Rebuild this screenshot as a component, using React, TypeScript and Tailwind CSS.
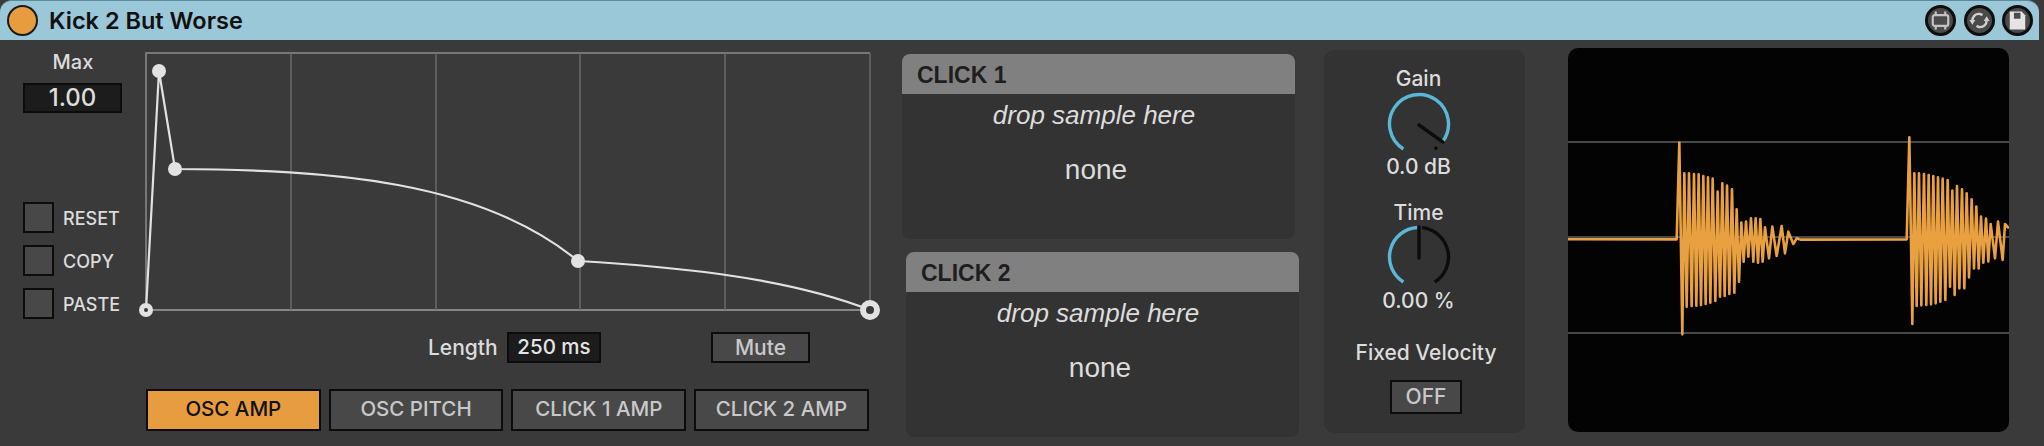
const ui = "font-['Inter',sans-serif]";

// peaks of the two kick bursts, read off the scope as [x, y] offsets at 3x
const burst1: [number, number][] = [
  [110, 358], [118, 68], [127, 643],
  [133, 160], [140, 560], [147, 160], [155, 558], [162, 162], [169, 557], [176, 163], [183, 555],
  [190, 168], [197, 552], [204, 172], [211, 548], [218, 176], [226, 543], [233, 215], [240, 530],
  [247, 190], [254, 528], [261, 197], [268, 522], [276, 208], [283, 518], [290, 268], [297, 485],
  [304, 308], [311, 425], [318, 305], [325, 410], [333, 295], [340, 425], [347, 295], [354, 428],
  [361, 297], [368, 425], [375, 322], [387, 415], [397, 320], [410, 408], [425, 318], [435, 400],
  [445, 335], [460, 372], [470, 355], [482, 359],
];
const burst2: [number, number][] = [
  [80, 358], [88, 52], [97, 612],
  [103, 160], [110, 558], [117, 160], [124, 556], [132, 162], [139, 555], [146, 165], [153, 553],
  [160, 168], [167, 550], [174, 172], [181, 545], [188, 176], [196, 540], [203, 180], [210, 500],
  [217, 212], [224, 525], [231, 198], [238, 505], [246, 208], [253, 505], [260, 220], [267, 472],
  [275, 238], [282, 445], [289, 260], [296, 445], [303, 290], [310, 428], [318, 296], [325, 424],
  [332, 312], [345, 415], [354, 305], [368, 420], [375, 312], [387, 325],
];

function toPage(pts: [number, number][], originX: number) {
  return pts.map(([x, y]) => `${originX + x / 3},${120 + y / 3}`);
}

function Waveform() {
  const points = ["1568,239.3", ...toPage(burst1, 1640), ...toPage(burst2, 1880)].join(" ");
  return (
    <svg className="block" width="441" height="384" viewBox="1568 48 441 384">
      <line x1="1568" x2="2009" y1="142" y2="142" stroke="#484848" strokeWidth="2" />
      <line x1="1568" x2="2009" y1="237" y2="237" stroke="#484848" strokeWidth="2" />
      <line x1="1568" x2="2009" y1="333" y2="333" stroke="#484848" strokeWidth="2" />
      <polyline points={points} fill="none" stroke="#e8a040" strokeWidth="2.6" strokeLinejoin="round" />
    </svg>
  );
}

function Envelope() {
  const grid = [291, 436, 580, 725, 870];
  return (
    <svg className="block shrink-0" width="746" height="285" viewBox="136 40 746 285">
      <path d="M146 310V53H870" fill="none" stroke="#8c8c8c" strokeWidth="1.5" />
      <line x1="146" x2="870" y1="310" y2="310" stroke="#a0a0a0" strokeWidth="1.5" />
      {grid.map((x) => (
        <line key={x} x1={x} x2={x} y1="53" y2="310" stroke="#6a6a6a" strokeWidth="1.5" />
      ))}
      <path
        d="M146 310L159 71L175 169C330 170 480 180 578 261C660 266 780 275 870 310"
        fill="none"
        stroke="#e2e2e2"
        strokeWidth="2.2"
      />
      <circle cx="146" cy="310" r="7" fill="#e2e2e2" />
      <circle cx="146" cy="310" r="2" fill="#3a3a3a" />
      <circle cx="159" cy="71" r="7" fill="#e2e2e2" />
      <circle cx="175" cy="169" r="7" fill="#e2e2e2" />
      <circle cx="578" cy="261" r="7" fill="#e2e2e2" />
      <circle cx="870" cy="310" r="7" fill="#3a3a3a" stroke="#e2e2e2" strokeWidth="6" />
    </svg>
  );
}

function polar(cx: number, cy: number, r: number, deg: number) {
  const a = (deg * Math.PI) / 180;
  return [cx + r * Math.sin(a), cy - r * Math.cos(a)];
}

function arc(r: number, from: number, to: number) {
  const [x1, y1] = polar(32, 32, r, from);
  const [x2, y2] = polar(32, 32, r, to);
  const large = Math.abs(to - from) > 180 ? 1 : 0;
  return `M${x1} ${y1}A${r} ${r} 0 ${large} 1 ${x2} ${y2}`;
}

function Knob({ angle, blueEnd, blackStart }: { angle: number; blueEnd: number; blackStart: number }) {
  const [px, py] = polar(32, 32, 30, angle);
  return (
    <svg className="block" width="64" height="64" viewBox="0 0 64 64">
      <path d={arc(29.5, -148, blueEnd)} fill="none" stroke="#5bb7d8" strokeWidth="3.4" />
      <path d={arc(29.5, blackStart, 148)} fill="none" stroke="#0c0c0c" strokeWidth="3.4" />
      <line x1="32" y1="33" x2={px} y2={py} stroke="#0c0c0c" strokeWidth="3.4" strokeLinecap="round" />
    </svg>
  );
}

function ClickPanel({ title, className }: { title: string; className?: string }) {
  return (
    <div className={`h-[185px] w-[393px] overflow-hidden rounded-[8px] bg-[#333333] font-['Liberation_Sans',Arial,sans-serif] ${className ?? ""}`}>
      <div className="flex h-10 items-center bg-[#808080] pl-[15px] pt-[2px] text-[23px] font-bold leading-none text-[#1e1e1e]">
        {title}
      </div>
      <p className="mt-[6px] pr-[9px] text-center text-[26px] italic leading-[30px] text-[#dcdcdc]">drop sample here</p>
      <p className="mt-[24px] pr-[5px] text-center text-[28px] leading-[32px] text-[#dcdcdc]">none</p>
    </div>
  );
}

function HeaderButton({ children }: { children: React.ReactNode }) {
  return (
    <div className="flex h-[31px] w-[31px] items-center justify-center rounded-full border-[3px] border-[#0e0e0e] bg-[#4a4a4a]">
      <svg width="25" height="25" viewBox="0 0 21 21">{children}</svg>
    </div>
  );
}

function SmallCheck({ label }: { label: string }) {
  return (
    <div className="flex h-[31px] items-center gap-[9px]">
      <div className="h-[31px] w-[31px] border-[2px] border-[#0c0c0c] bg-[#484848]" />
      <span className="pt-[2px] text-[18px] font-medium text-[#dcdcdc]">{label}</span>
    </div>
  );
}

function Tab({ label, active }: { label: string; active?: boolean }) {
  return (
    <div
      className={`flex h-[42px] w-[174.7px] items-center justify-center border-[2px] border-[#0c0c0c] text-[20.5px] font-medium ${
        active ? "bg-[#e89c40] text-[#111111]" : "bg-[#484848] text-[#c8c8c8]"
      }`}
    >
      {label}
    </div>
  );
}

export default function App() {
  return (
    <div className={`h-[446px] w-[2044px] overflow-hidden bg-[#3a3a3a] ${ui}`}>
      {/* Title bar */}
      <div className="flex h-10 w-[2039px] items-center rounded-t-[12px] border-t border-[#5f8a9b] bg-[#9ac8d8] pl-[7px] pr-[6px]">
        <div className="h-[31px] w-[31px] rounded-full border-[2px] border-[#1a1a1a] bg-[#e89c40]" />
        <span className="ml-[11px] text-[23.5px] font-semibold leading-none text-[#111111]">Kick 2 But Worse</span>
        <div className="ml-auto flex gap-[7.5px]">
          <HeaderButton>
            <path d="M6.5 3V6M14.5 3V6M6.5 15V18M14.5 15V18" stroke="#c4c4c4" strokeWidth="1.8" />
            <rect x="4" y="6" width="13" height="9" rx="1.5" fill="none" stroke="#c4c4c4" strokeWidth="1.8" />
          </HeaderButton>
          <HeaderButton>
            <path d="M4.5 11C4.5 7 7 4.5 11 5L13 6" fill="none" stroke="#d0d0d0" strokeWidth="2" />
            <path d="M16.5 10C16.5 14 14 16.5 10 16L8 15" fill="none" stroke="#d0d0d0" strokeWidth="2" />
            <path d="M2 10H7L4.5 14ZM14 11H19L16.5 7Z" fill="#d0d0d0" />
          </HeaderButton>
          <HeaderButton>
            <path d="M4 3H14L17 6V18H4Z" fill="#e4e4e4" />
            <rect x="7.5" y="4" width="5.5" height="5" fill="#4a4a4a" />
          </HeaderButton>
        </div>
      </div>

      <div className="flex">
        {/* Envelope section */}
        <div className="w-[902px] shrink-0">
          <div className="flex">
            <div className="w-[136px] shrink-0 pl-[23px]">
              <div className="mt-[10px] w-[100px] text-center text-[20px] font-medium leading-6 text-[#dcdcdc]">Max</div>
              <div className="mt-[9px] flex h-[30px] w-[99px] items-center justify-center border-[2px] border-[#0c0c0c] bg-[#1c1c1c] text-[24px] font-medium text-[#dcdcdc]">
                1.00
              </div>
              <div className="mt-[89px] flex flex-col gap-[12px]">
                <SmallCheck label="RESET" />
                <SmallCheck label="COPY" />
                <SmallCheck label="PASTE" />
              </div>
            </div>
            <Envelope />
          </div>
          <div className="mt-[7px] flex items-center pl-[428px]">
            <span className="w-[79px] text-[21px] font-medium text-[#dcdcdc]">Length</span>
            <div className="flex h-[31px] w-[94px] items-center justify-center border-[2px] border-[#0c0c0c] bg-[#1c1c1c] text-[20.5px] font-medium text-[#e4e4e4]">
              250 ms
            </div>
            <div className="ml-[110px] flex h-[31px] w-[99px] items-center justify-center border-[2px] border-[#0c0c0c] bg-[#484848] text-[21px] font-medium text-[#c8c8c8]">
              Mute
            </div>
          </div>
          <div className="mt-[25px] flex gap-2 pl-[146px]">
            <Tab label="OSC AMP" active />
            <Tab label="OSC PITCH" />
            <Tab label="CLICK 1 AMP" />
            <Tab label="CLICK 2 AMP" />
          </div>
        </div>

        {/* Sample slots */}
        <div className="w-[397px] shrink-0 pt-[14px]">
          <ClickPanel title="CLICK 1" />
          <ClickPanel title="CLICK 2" className="ml-1 mt-[13px]" />
        </div>

        {/* Gain / time */}
        <div className="ml-[25px] mt-[10px] h-[383px] w-[201px] shrink-0 rounded-[10px] bg-[#333333] text-[#dcdcdc]">
          <div className="flex w-[189px] flex-col items-center pt-[17px] text-[21px] font-medium leading-6">
            <span>Gain</span>
            <div className="mt-[1px]"><Knob angle={127} blueEnd={127} blackStart={142} /></div>
            <span className="-mt-[1px]">0.0 dB</span>
            <span className="mt-[22px]">Time</span>
            <Knob angle={0} blueEnd={-3} blackStart={6} />
            <span>0.00 %</span>
          </div>
          <div className="mt-[28px] w-[204px] text-center text-[21px] font-medium leading-6">Fixed Velocity</div>
          <div className="ml-[66px] mt-[15px] flex h-[34px] w-[72px] items-center justify-center border-[2px] border-[#0c0c0c] bg-[#484848] text-[21px] font-medium text-[#c8c8c8]">
            OFF
          </div>
        </div>

        {/* Scope */}
        <div className="ml-[43px] mt-2 h-[384px] w-[441px] shrink-0 overflow-hidden rounded-[10px] bg-[#030303]">
          <Waveform />
        </div>
      </div>
    </div>
  );
}
